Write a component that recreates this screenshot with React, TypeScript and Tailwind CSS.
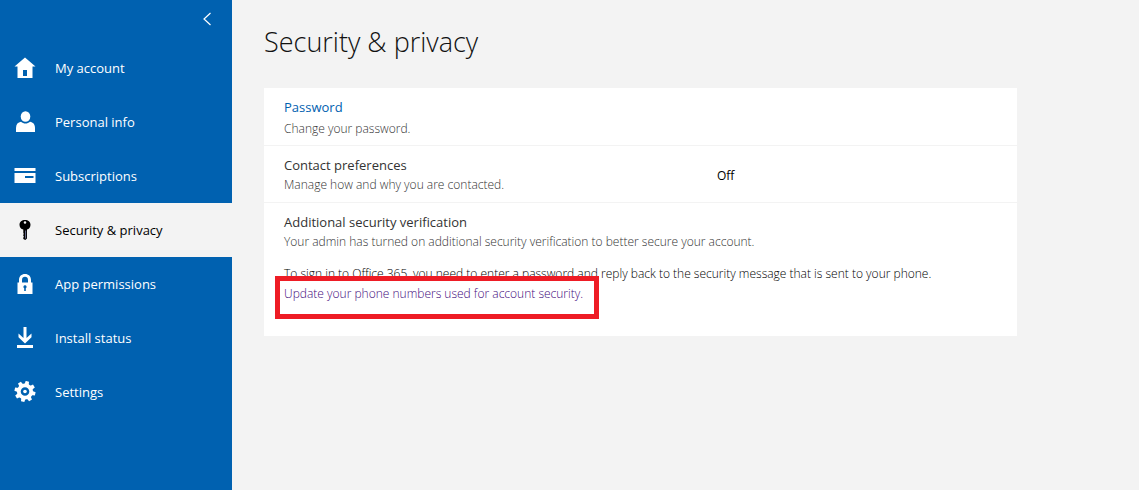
import { ReactNode } from 'react';

type NavItem = {
   label: string;
   icon: ReactNode;
   active?: boolean;
};

const navItems: NavItem[] = [
   {
      label: 'My account',
      icon: <path fillRule="evenodd" d="M11 0.5 L21.5 9.5 H18.5 V21 H3.5 V9.5 H0.5 Z M9 13 V19 H13 V13 Z" />,
   },
   {
      label: 'Personal info',
      icon: (
         <>
            <ellipse cx="11.5" cy="5.5" rx="4.8" ry="5.3" />
            <path d="M2 21 V17 C2 13.2 4 11.3 7 10.8 C9.5 13.2 13.5 13.2 16 10.8 C19 11.3 21 13.2 21 17 V21 Z" />
         </>
      ),
   },
   {
      label: 'Subscriptions',
      icon: <path fillRule="evenodd" d="M0.5 3 H21.5 V6 H0.5 Z M0.5 8 H21.5 V18 H0.5 Z M11 11 V13 H19.5 V11 Z" />,
   },
   {
      label: 'Security & privacy',
      active: true,
      icon: (
         <>
            <path
               fillRule="evenodd"
               d="M11 1 C14.2 1 16.5 3 16.5 5.8 C16.5 8.4 15 10 13 10.6 V19.5 L11.3 21 L9.3 20 V18.4 L10 17.8 L9.3 17 V15.6 L10 15 L9.3 14.2 V10.6 C7 10 5.5 8.4 5.5 5.8 C5.5 3 7.8 1 11 1 Z M11 2.2 A1.3 1.3 0 1 0 11 4.8 A1.3 1.3 0 1 0 11 2.2 Z"
            />
            <path d="M11.6 11.5 V19.5" stroke="#8a8fb8" strokeWidth="0.8" />
         </>
      ),
   },
   {
      label: 'App permissions',
      icon: (
         <path
            fillRule="evenodd"
            d="M3.5 9.5 H5 V7 C5 3.3 7.5 1 11 1 C14.5 1 17 3.3 17 7 V9.5 H18.5 V21 H3.5 Z M8 9.5 H14 V7 C14 5 12.8 3.8 11 3.8 C9.2 3.8 8 5 8 7 Z M11 12.2 A1.6 1.6 0 0 0 10.2 15.2 V18 H11.8 V15.2 A1.6 1.6 0 0 0 11 12.2 Z"
         />
      ),
   },
   {
      label: 'Install status',
      icon: <path d="M9.5 0 H12.5 V11 L17.5 6.5 V10.3 L11 16.5 L4.5 10.3 V6.5 L9.5 11 Z M3 18 H19 V21 H3 Z" />,
   },
   {
      label: 'Settings',
      icon: (
         <>
            <circle cx="11" cy="10.5" r="6.2" fill="none" stroke="currentColor" strokeWidth="3.8" />
            <circle cx="11" cy="10.5" r="1.8" />
            {[13, 58, 103, 148, 193, 238, 283, 328].map(angle => (
               <path key={angle} d="M8.8 4 L9.3 0 H12.7 L13.2 4 Z" transform={`rotate(${angle} 11 10.5)`} />
            ))}
         </>
      ),
   },
];

const Sidebar = () => (
   <aside className="w-[232px] shrink-0 bg-[#0061b0] text-white">
      <div className="flex h-[41px] items-center justify-end pr-[18px] pb-1">
         <button type="button" aria-label="Collapse navigation" className="p-0.5">
            <svg width="10" height="14" viewBox="0 0 10 14" fill="none" stroke="currentColor" strokeWidth="1.2">
               <path d="M8.5 1 L2 7 L8.5 13" />
            </svg>
         </button>
      </div>
      <nav>
         {navItems.map(({ label, icon, active }) => (
            <a
               key={label}
               href="#"
               aria-current={active ? 'page' : undefined}
               className={`flex h-[54px] items-center gap-[19px] pt-0.5 pl-3.5 text-[13px] ${active ? 'bg-[#f3f3f3] text-black' : ''}`}>
               <svg width="22" height="22" viewBox="0 0 22 22" className="mb-0.5" fill="currentColor" aria-hidden="true">
                  {icon}
               </svg>
               {label}
            </a>
         ))}
      </nav>
   </aside>
);

const App = () => (
   <div className="flex min-h-screen bg-[#f3f3f3] font-['Open_Sans',sans-serif]">
      <Sidebar />
      <main className="min-w-0 flex-1 px-8 pt-5 pb-8">
         <h1 className="text-[27px] leading-[44px] font-light text-[#111]">Security &amp; privacy</h1>
         <div className="mt-6 max-w-[753px] divide-y divide-[#f3f3f3] bg-white text-xs leading-5 font-light">
            <section className="px-5 pt-[9px] pb-1.5">
               <h2 className="text-[13px] font-normal">
                  <a href="#" className="text-[#0061b0]">
                     Password
                  </a>
               </h2>
               <p className="pt-0.5 text-[#333]">Change your password.</p>
            </section>
            <section className="flex items-center px-5 pt-[9px] pb-2">
               <div className="flex-1">
                  <h2 className="text-[13px] font-normal text-[#333]">Contact preferences</h2>
                  <p className="pt-px leading-[18px] text-[#333]">Manage how and why you are contacted.</p>
               </div>
               <p className="w-[280px] pt-0.5 font-normal text-black">Off</p>
            </section>
            <section className="px-5 pt-[9px] pb-8">
               <h2 className="text-[13px] font-normal text-[#333]">Additional security verification</h2>
               <p className="pt-px leading-[18px] text-[#333]">
                  Your admin has turned on additional security verification to better secure your account.
               </p>
               <p className="mt-[13px] text-black">
                  To sign in to Office 365, you need to enter a password and reply back to the security message that is
                  sent to your phone.
               </p>
               <div className="relative w-fit">
                  <a href="#" className="text-[#3f0a7d]">
                     Update your phone numbers used for account security.
                  </a>
                  <span className="pointer-events-none absolute -top-2 -right-4 -bottom-[15px] -left-[9px] border-[5px] border-[#ee1c25]" />
               </div>
            </section>
         </div>
      </main>
   </div>
);

export default App;
